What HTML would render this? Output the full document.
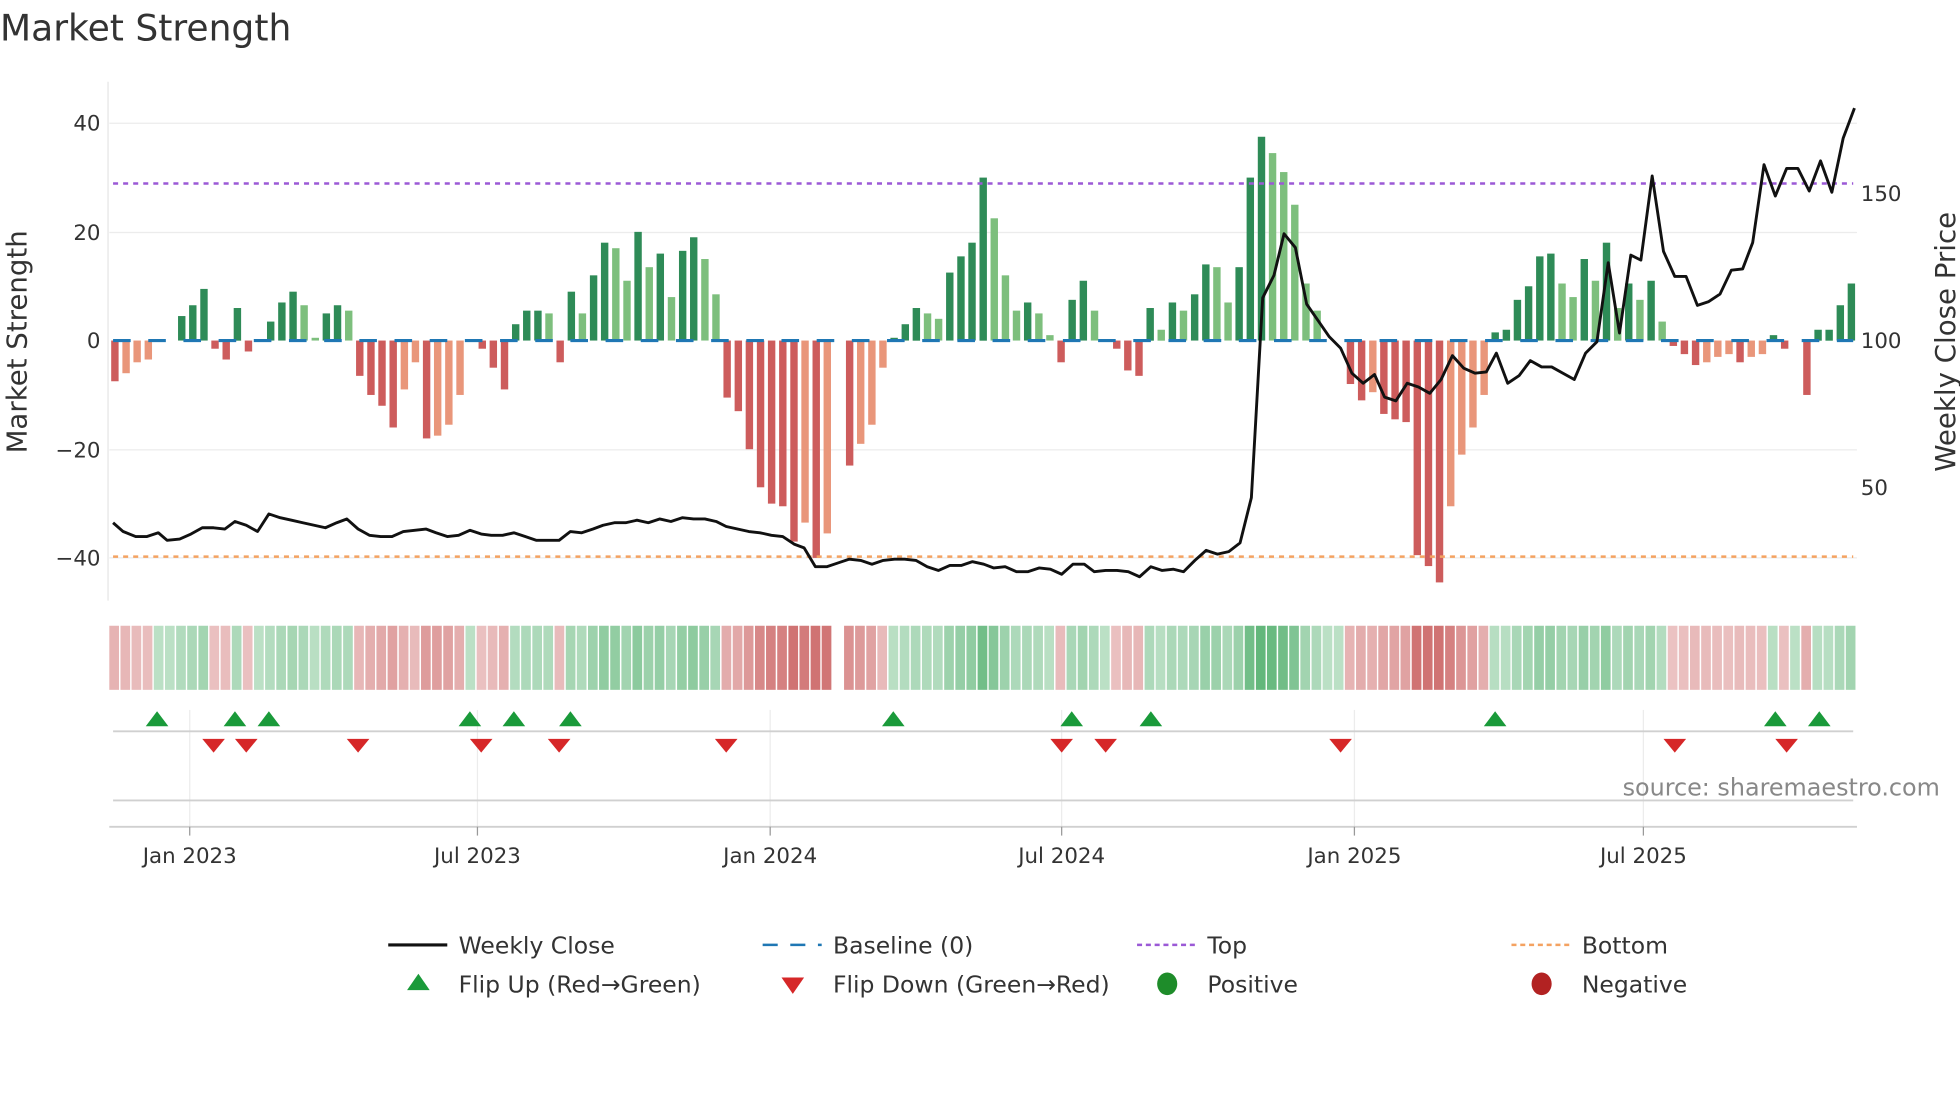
<!DOCTYPE html>
<html><head><meta charset="utf-8"><style>
html,body{margin:0;padding:0;background:#fff;}
svg{display:block;font-family:"DejaVu Sans","Liberation Sans",sans-serif;}
</style></head><body>
<svg id="s" width="1960" height="1102" viewBox="0 0 1560 877" xmlns="http://www.w3.org/2000/svg">
<rect width="1560" height="877" fill="#fff"/>
<text x="0" y="32" font-size="28.7" fill="#333">Market Strength</text>
<g id="grid" stroke="#ececec" stroke-width="1">
<line x1="87" x2="1478" y1="98" y2="98"/><line x1="87" x2="1478" y1="185" y2="185"/>
<line x1="87" x2="1478" y1="358" y2="358"/><line x1="87" x2="1478" y1="444" y2="444"/>
</g>
<line x1="86" x2="86" y1="65" y2="478" stroke="#e6e6e6"/>
<g font-size="17" fill="#333" text-anchor="end">
<text x="80" y="104">40</text><text x="80" y="191">20</text><text x="80" y="277">0</text>
<text x="80" y="364">−20</text><text x="80" y="450">−40</text>
</g>
<g font-size="17" fill="#333">
<text x="1481" y="160">150</text><text x="1481" y="277">100</text><text x="1481" y="394">50</text>
</g>
<text transform="translate(21,272) rotate(-90)" font-size="22" fill="#333" text-anchor="middle">Market Strength</text>
<text transform="translate(1556,272) rotate(-90)" font-size="22" fill="#333" text-anchor="middle">Weekly Close Price</text>
<g id="bars"></g>
<line x1="90" x2="1475" y1="271" y2="271" stroke="#1f77b4" stroke-width="2.5" stroke-dasharray="14,14"/>
<line x1="90" x2="1475" y1="146" y2="146" stroke="#9b59d6" stroke-width="2" stroke-dasharray="4,4"/>
<line x1="90" x2="1475" y1="443" y2="443" stroke="#f4a261" stroke-width="2" stroke-dasharray="4,4"/>
<polyline id="price" fill="none" stroke="#111" stroke-width="2.3" stroke-linejoin="round"/>
<g id="strip"></g>
<g stroke="#ececec"><line x1="151" x2="151" y1="565" y2="658"/><line x1="380" x2="380" y1="565" y2="658"/><line x1="613" x2="613" y1="565" y2="658"/><line x1="845" x2="845" y1="565" y2="658"/><line x1="1078" x2="1078" y1="565" y2="658"/><line x1="1308" x2="1308" y1="565" y2="658"/></g>
<line x1="90" x2="1475" y1="582" y2="582" stroke="#d0d0d0" stroke-width="1.5"/>
<line x1="90" x2="1475" y1="637" y2="637" stroke="#d0d0d0" stroke-width="1.5"/>
<line x1="87" x2="1478" y1="658" y2="658" stroke="#d0d0d0" stroke-width="1.5"/>
<g stroke="#999"><line x1="151" x2="151" y1="658" y2="665"/><line x1="380" x2="380" y1="658" y2="665"/><line x1="613" x2="613" y1="658" y2="665"/><line x1="845" x2="845" y1="658" y2="665"/><line x1="1078" x2="1078" y1="658" y2="665"/><line x1="1308" x2="1308" y1="658" y2="665"/></g>
<g id="marks"></g>
<text x="1544" y="633" font-size="19" fill="#888" text-anchor="end">source: sharemaestro.com</text>
<g font-size="17" fill="#333" text-anchor="middle">
<text x="151" y="687">Jan 2023</text><text x="380" y="687">Jul 2023</text><text x="613" y="687">Jan 2024</text>
<text x="845" y="687">Jul 2024</text><text x="1078" y="687">Jan 2025</text><text x="1308" y="687">Jul 2025</text>
</g>
<g font-size="18.7" fill="#333">
<line x1="309" x2="356" y1="752" y2="752" stroke="#111" stroke-width="2.5"/><text x="365" y="759">Weekly Close</text>
<line x1="607" x2="654" y1="752" y2="752" stroke="#1f77b4" stroke-width="2" stroke-dasharray="12,10"/><text x="663" y="759">Baseline (0)</text>
<line x1="905" x2="952" y1="752" y2="752" stroke="#9b59d6" stroke-width="2" stroke-dasharray="4,3"/><text x="961" y="759">Top</text>
<line x1="1203" x2="1250" y1="752" y2="752" stroke="#f4a261" stroke-width="2" stroke-dasharray="4,3"/><text x="1259" y="759">Bottom</text>
<polygon points="324,788 333,775 342,788" fill="#1a9a3a"/><text x="365" y="790">Flip Up (Red→Green)</text>
<polygon points="622,778 631,791 640,778" fill="#d62728"/><text x="663" y="790">Flip Down (Green→Red)</text>
<ellipse cx="929" cy="783" rx="8" ry="9" fill="#1e8c2a"/><text x="961" y="790">Positive</text>
<ellipse cx="1227" cy="783" rx="8" ry="9" fill="#b22222"/><text x="1259" y="790">Negative</text>
</g>
</svg>
<script>
var v=[-7.5,-6,-4,-3.5,0,0,4.5,6.5,9.5,-1.5,-3.5,6,-2,0,3.5,7,9,6.5,0.5,5,6.5,5.5,-6.5,-10,-12,-16,-9,-4,-18,-17.5,-15.5,-10,0,-1.5,-5,-9,3,5.5,5.5,5,-4,9,5,12,18,17,11,20,13.5,16,8,16.5,19,15,8.5,-10.5,-13,-20,-27,-30,-30.5,-37,-33.5,-40,-35.5,0,-23,-19,-15.5,-5,0.5,3,6,5,4,12.5,15.5,18,30,22.5,12,5.5,7,5,1,-4,7.5,11,5.5,0,-1.5,-5.5,-6.5,6,2,7,5.5,8.5,14,13.5,7,13.5,30,37.5,34.5,31,25,10.5,5.5,0,0,-8,-11,-9.5,-13.5,-14.5,-15,-39.5,-41.5,-44.5,-30.5,-21,-16,-10,1.5,2,7.5,10,15.5,16,10.5,8,15,11,18,6,10.5,7.5,11,3.5,-1,-2.5,-4.5,-4,-3,-2.5,-4,-3,-2.5,1,-1.5,0,-10,2,2,6.5,10.5];
var N=v.length,x0=87,w=(1478-87)/N,s='',st='';
for(var i=0;i<N;i++){var a=v[i],p=i?v[i-1]:0,x=x0+i*w+1.5,bw=w-3,c;
if(a>0)c=(a>=p)?'#2e8b57':'#7dbf7d';else c=(a<=p)?'#cd5c5c':'#e9967a';
if(a!==0){var y=a>0?271-a*4.325:271;s+='<rect x="'+x.toFixed(1)+'" y="'+y.toFixed(1)+'" width="'+bw.toFixed(1)+'" height="'+Math.abs(a*4.325).toFixed(1)+'" fill="'+c+'"/>';}
if(i==65)continue;
var t=Math.min(1,0.18+Math.abs(a)/45),col;
if(a>=0){col='rgba(60,165,90,'+(0.25+0.55*t).toFixed(2)+')';}else{col='rgba(200,90,90,'+(0.25+0.6*t).toFixed(2)+')';}
st+='<rect x="'+(x0+i*w).toFixed(1)+'" y="498" width="'+(w-1.2).toFixed(1)+'" height="51" fill="'+col+'"/>';}
document.getElementById('bars').innerHTML=s;document.getElementById('strip').innerHTML=st;
var pr=[[90,416],[98,423],[108,427],[117,427],[126,424],[133,430],[143,429],[152,425],[161,420],[170,420],[179,421],[187,415],[196,418],[205,423],[214,409],[223,412],[232,414],[241,416],[250,418],[259,420],[268,416],[276,413],[285,421],[294,426],[303,427],[312,427],[321,423],[330,422],[339,421],[347,424],[356,427],[365,426],[374,422],[383,425],[391,426],[400,426],[409,424],[418,427],[427,430],[436,430],[445,430],[454,423],[463,424],[472,421],[480,418],[489,416],[498,416],[507,414],[516,416],[525,413],[534,415],[543,412],[552,413],[561,413],[570,415],[578,419],[587,421],[596,423],[605,424],[614,426],[623,427],[632,433],[640,436],[649,451],[658,451],[667,448],[676,445],[685,446],[694,449],[703,446],[712,445],[720,445],[729,446],[738,451],[747,454],[756,450],[765,450],[774,447],[783,449],[791,452],[800,451],[809,455],[818,455],[827,452],[836,453],[845,457],[854,449],[863,449],[871,455],[880,454],[889,454],[898,455],[907,459],[916,451],[925,454],[934,453],[942,455],[951,446],[960,438],[969,441],[978,439],[987,432],[996,396],[1005,237],[1014,219],[1022,186],[1031,197],[1040,242],[1049,255],[1058,268],[1067,277],[1076,297],[1085,305],[1094,298],[1102,316],[1111,319],[1120,305],[1129,308],[1138,313],[1147,302],[1156,283],[1165,293],[1174,297],[1183,296],[1191,281],[1200,305],[1209,299],[1218,287],[1227,292],[1235,292],[1244,297],[1253,302],[1262,281],[1271,272],[1280,209],[1289,265],[1298,203],[1306,207],[1315,140],[1324,200],[1333,220],[1342,220],[1351,243],[1360,240],[1369,234],[1378,215],[1387,214],[1395,193],[1404,131],[1413,156],[1422,134],[1431,134],[1440,152],[1449,128],[1458,153],[1467,110],[1476,86]];
document.getElementById('price').setAttribute('points',pr.map(function(q){return q.join(',')}).join(' '));
var up=[125,187,214,374,409,454,711,853,916,1190,1413,1448],dn=[170,196,285,383,445,578,845,880,1067,1333,1422],m='';
up.forEach(function(x){m+='<polygon points="'+(x-9)+',578 '+x+',566 '+(x+9)+',578" fill="#1a9a3a"/>';});
dn.forEach(function(x){m+='<polygon points="'+(x-9)+',588 '+x+',599 '+(x+9)+',588" fill="#d62728"/>';});
document.getElementById('marks').innerHTML=m;
</script>
</body></html>
